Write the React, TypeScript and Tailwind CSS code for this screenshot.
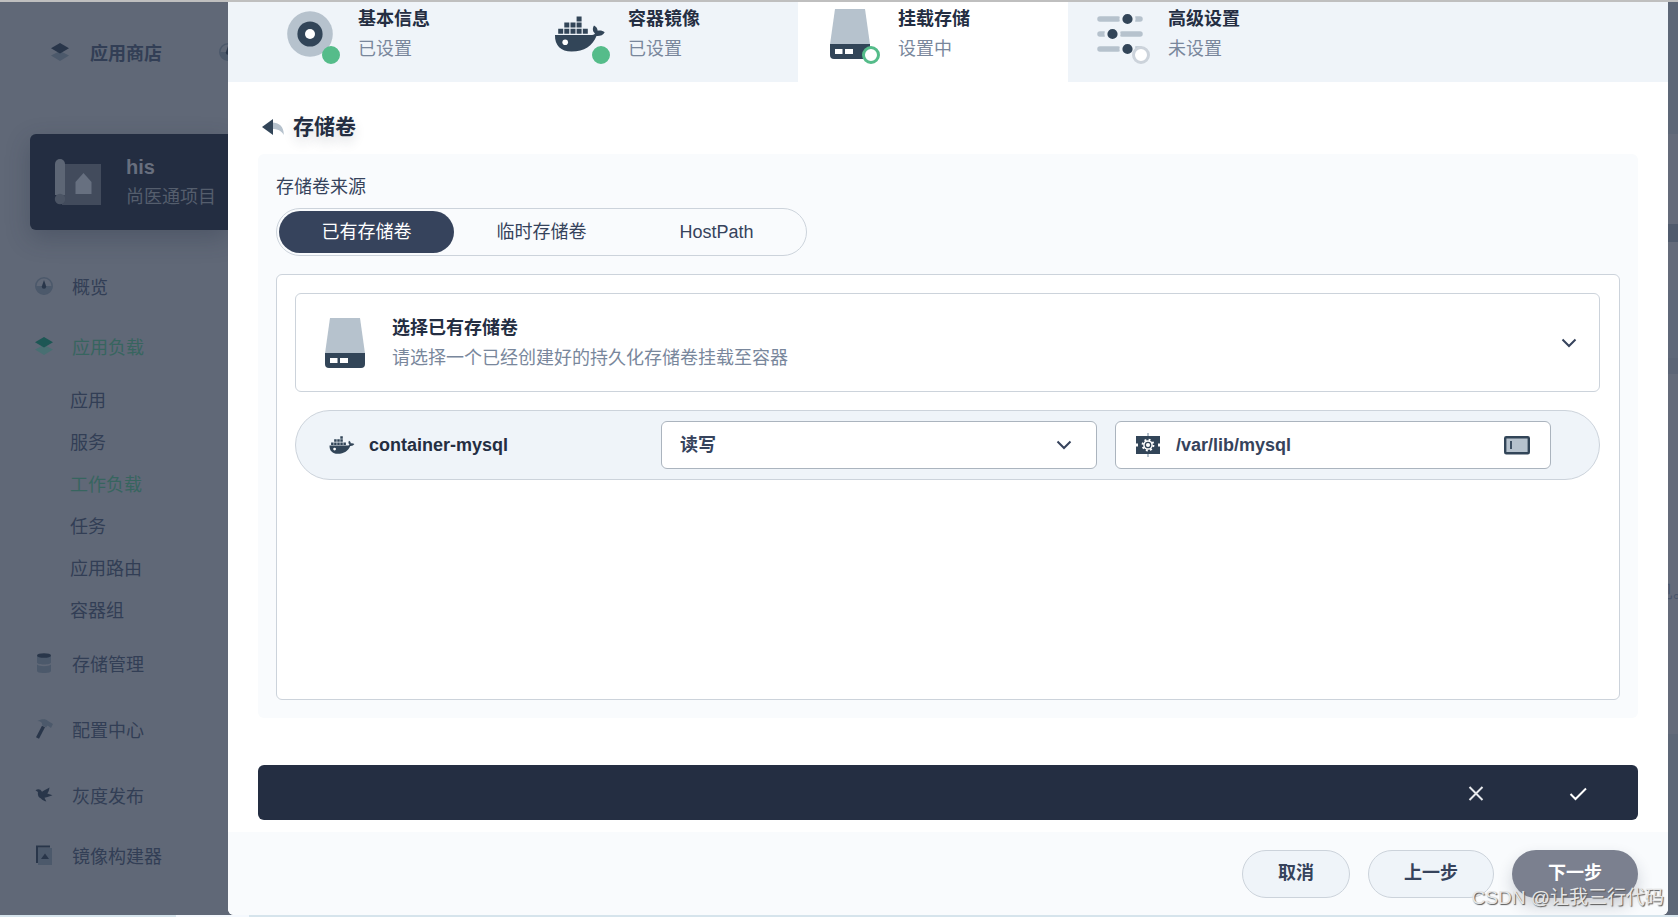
import { useState } from "react";
import type { ReactNode } from "react";

type Status = "done" | "active" | "todo";

const steps: { title: string; text: string; status: Status; icon: ReactNode }[] = [
  { title: "基本信息", text: "已设置", status: "done", icon: <DiscIcon /> },
  { title: "容器镜像", text: "已设置", status: "done", icon: <DockerIcon className="w-[60px] h-[60px]" /> },
  { title: "挂载存储", text: "设置中", status: "active", icon: <StorageIcon /> },
  { title: "高级设置", text: "未设置", status: "todo", icon: <SlidersIcon /> },
];

const workloads = ["应用", "服务", "工作负载", "任务", "应用路由", "容器组"];

const sources = ["已有存储卷", "临时存储卷", "HostPath"];

const dotStyle: Record<Status, string> = {
  done: "bg-[#55bc8a] border-[#55bc8a]",
  active: "bg-white border-[#55bc8a]",
  todo: "bg-white border-[#ccd3db]",
};

function DiscIcon() {
  return (
    <svg viewBox="0 0 60 60" className="w-[60px] h-[60px]">
      <circle cx="30" cy="30" r="22.8" fill="#b6c2cd" />
      <circle cx="30" cy="30" r="12.6" fill="#324558" />
      <circle cx="30" cy="30" r="5" fill="#fff" />
    </svg>
  );
}

function DockerIcon({ className }: { className: string }) {
  return (
    <svg viewBox="0 0 60 60" className={className}>
      <g fill="#324558">
        <path d="M26.6 12.4h5v5h-5zM14.3 18.6h5v5h-5zM20.5 18.6h5v5h-5zM26.6 18.6h5v5h-5zM8.2 24.8h5v5h-5zM14.3 24.8h5v5h-5zM20.5 24.8h5v5h-5zM26.6 24.8h5v5h-5zM32.8 24.8h5v5h-5z" />
        <path d="M5 31h37.2c1.3 0 2.4-.6 2.8-1.4-2.6-2.200-2.6-5.600-1-8 2.100 1 3.400 2.900 3.700 5.200 2.500-.5 5.200 0 7 1.400-1.600 2.900-4.700 4.100-8.200 3.800C42.500 41.700 34.500 47.600 21.500 47.600 11 47.600 4.600 41.500 5 31z" />
      </g>
      <circle cx="15.2" cy="38.2" r="2.8" fill="#fff" />
    </svg>
  );
}

function StorageIcon() {
  return (
    <svg viewBox="0 0 60 60" className="w-[60px] h-[60px]">
      <path d="M15 5h30l5 35.5H10z" fill="#b6c2cd" />
      <path d="M10 40h40v11a4 4 0 0 1-4 4H14a4 4 0 0 1-4-4z" fill="#324558" />
      <path d="M15 45h7.500v5H15zM25 45h8v5h-8z" fill="#fff" />
    </svg>
  );
}

function SlidersIcon() {
  return (
    <svg viewBox="0 0 60 60" className="w-[60px] h-[60px]">
      <path
        d="M10 15h18M46 15h4M10 30h4M32 30h18M10 45h18M46 45h4"
        stroke="#b6c2cd"
        strokeWidth="5.5"
        strokeLinecap="round"
      />
      <g fill="#324558" stroke="#eff4f9" strokeWidth="3">
        <circle cx="37.5" cy="15" r="6.6" />
        <circle cx="22.5" cy="30" r="6.6" />
        <circle cx="37.5" cy="45" r="6.6" />
      </g>
    </svg>
  );
}

function BackIcon() {
  return (
    <svg viewBox="0 0 24 24" className="w-6 h-6">
      <path d="M11 7.500c7 0 12 4 11.800 12.500C20.500 15.600 16.500 14 11 14z" fill="#b6c2cd" />
      <path d="M12 4v16L1 12z" fill="#324558" />
    </svg>
  );
}

function ChevronIcon() {
  return (
    <svg viewBox="0 0 24 24" className="w-6 h-6 shrink-0 pointer-events-none" fill="none" stroke="#36435c" strokeWidth="2">
      <path d="M5.500 8.500l6.500 6.500L18.500 8.500" />
    </svg>
  );
}

function GearIcon() {
  return (
    <svg viewBox="0 0 24 24" className="w-6 h-6 shrink-0">
      <path d="M12 0v24" stroke="#b6c2cd" strokeWidth="2" />
      <path d="M0 3h24v7.500h-2v3h2V21H0v-7.500h2v-3H0z" fill="#324558" />
      <circle cx="12" cy="12" r="5.4" fill="none" stroke="#fff" strokeWidth="2" strokeDasharray="1.9 2.340" />
      <circle cx="12" cy="12" r="4.8" fill="#fff" />
      <circle cx="12" cy="12" r="2.7" fill="none" stroke="#324558" strokeWidth="1.3" />
    </svg>
  );
}

function FieldIcon() {
  return (
    <svg viewBox="0 0 26 24" className="w-[26px] h-6 shrink-0">
      <rect x="1.2" y="4.2" width="23.6" height="16" rx="1" fill="#b6c2cd" stroke="#324558" strokeWidth="2.4" />
      <path d="M7 8v8" stroke="#324558" strokeWidth="1.8" />
    </svg>
  );
}

function LayersIcon({ active = false }: { active?: boolean }) {
  return (
    <svg viewBox="0 0 20 20" className="w-5 h-5">
      <path d="M10 9l9 4.500-9 5.500-9-5.500z" fill={active ? "#486f72" : "#4c596b"} />
      <path d="M10 1l9 5.200-9 5.300-9-5.300z" fill={active ? "#1d5755" : "#29364a"} />
    </svg>
  );
}

function GaugeIcon() {
  return (
    <svg viewBox="0 0 20 20" className="w-5 h-5">
      <circle cx="10" cy="10" r="8.2" fill="none" stroke="#4c596b" strokeWidth="1.5" />
      <path d="M1.500 10h17a8.500 8.500 0 0 1-17 0z" fill="#4c596b" />
      <path d="M10 4l2.200 6.500a2.200 2.200 0 1 1-4.400 0z" fill="#29364a" />
    </svg>
  );
}

function DatabaseIcon() {
  return (
    <svg viewBox="0 0 20 20" className="w-5 h-5">
      <path d="M3 3v6.500c0 2.600 14 2.600 14 0V3zM3 11.500v6.500c0 2.700 14 2.700 14 0v-6.500c-2 2.300-12 2.300-14 0z" fill="#4c596b" />
      <ellipse cx="10" cy="2.5" rx="7" ry="2.3" fill="#29364a" />
    </svg>
  );
}

function HammerIcon() {
  return (
    <svg viewBox="0 0 20 20" className="w-5 h-5">
      <path d="M9.500 7.500L3.500 19" stroke="#29364a" strokeWidth="3.4" />
      <path d="M3.500 2C8-.5 12 0 14 2l5 3-2 4-3.500-2.500-1.500 2L8 6c1-2-1-3.800-4.500-4z" fill="#4c596b" />
    </svg>
  );
}

function BirdIcon() {
  return (
    <svg viewBox="0 0 20 20" className="w-5 h-5">
      <path
        d="M1.500 5.200C4 3.700 6.500 4 8 6.800 10 5 12.500 4.500 15.500 2.500 15.200 5 14.500 7 13.300 8.600L18.500 10.300 13.500 12 10.500 12.700 12.300 16.500C10 15.800 8 14.800 7 13.500 4.500 12.500 3.500 10.500 3.900 7z"
        fill="#29364a"
      />
    </svg>
  );
}

function ImageBuilderIcon() {
  return (
    <svg viewBox="0 0 20 20" className="w-5 h-5">
      <path d="M4 3h14v17H4z" fill="#4c596b" />
      <path d="M3 18V1.500H16" fill="none" stroke="#29364a" strokeWidth="2" />
      <path d="M11 8.500l4 5.500H7z" fill="#29364a" />
    </svg>
  );
}

function ProjectIcon() {
  return (
    <svg viewBox="0 0 48 48" className="w-12 h-12">
      <path d="M11 6h36v41H8z" fill="#424b5c" />
      <path d="M1 6a5 5 0 0 1 10 0v31H1z" fill="#5d6675" />
      <circle cx="6" cy="41" r="5.2" fill="#4b5464" />
      <path d="M29.500 15l8 9v12h-16V24z" fill="#677080" />
    </svg>
  );
}

function NavItem({ icon, label, active = false }: { icon: ReactNode; label: string; active?: boolean }) {
  return (
    <a href="#" className={`flex items-center h-[60px] gap-[18px] ${active ? "text-[#37655f]" : "text-[#323e55]"}`}>
      <span className="-mt-1">{icon}</span>
      {label}
    </a>
  );
}

function Sidebar() {
  return (
    <aside className="w-[228px] shrink-0 overflow-hidden text-[#323e55]">
      <div className="flex items-center h-[104px] pl-[50px] whitespace-nowrap">
        <span className="-mt-1"><LayersIcon /></span>
        <a href="#" className="ml-5 font-bold">应用商店</a>
        <span className="ml-14 -mt-1"><GaugeIcon /></span>
      </div>
      <div className="flex items-center h-24 mt-7 ml-[30px] pl-6 gap-6 rounded-l-md bg-[#232d41] shadow-[0_8px_24px_rgba(35,45,65,0.3)] whitespace-nowrap text-[#686f7e]">
        <ProjectIcon />
        <div>
          <p className="text-[20px] leading-[30px] font-bold">his</p>
          <p className="leading-[30px] text-[#555e6d]">尚医通项目</p>
        </div>
      </div>
      <nav className="pl-[34px] pt-7">
        <NavItem icon={<GaugeIcon />} label="概览" />
        <NavItem icon={<LayersIcon active />} label="应用负载" active />
        <ul className="pl-9 pt-[2px]">
          {workloads.map((w) => (
            <li key={w}>
              <a href="#" className={`block leading-[42px] ${w === "工作负载" ? "text-[#37655f]" : ""}`}>{w}</a>
            </li>
          ))}
        </ul>
        <div className="flex flex-col gap-[6px] pt-[3px]">
          <NavItem icon={<DatabaseIcon />} label="存储管理" />
          <NavItem icon={<HammerIcon />} label="配置中心" />
          <NavItem icon={<BirdIcon />} label="灰度发布" />
        </div>
        <NavItem icon={<ImageBuilderIcon />} label="镜像构建器" />
      </nav>
    </aside>
  );
}

// sliver of the page that stays visible right of the dialog
function PageEdge() {
  return (
    <div className="flex flex-col w-[10px] shrink-0 overflow-hidden bg-[#5d6777]">
      <div className="h-[90px] mt-[132px] bg-[#646b7a]" />
      <div className="h-[18px] bg-[#505b6d]" />
      <div className="h-12 bg-[#646b7a]" />
      <div className="h-[68px] bg-[#5f6879]" />
      <div className="h-4 bg-[#5c6576]" />
      <div className="h-[360px] pt-[206px] bg-[#646b7a]">
        <p className="-ml-[13px] leading-6 whitespace-nowrap text-[#4a566c]">见。</p>
      </div>
    </div>
  );
}

export default function App() {
  const [source, setSource] = useState("已有存储卷");
  const [mode, setMode] = useState("rw");
  const [path, setPath] = useState("/var/lib/mysql");

  return (
    <div className="relative flex flex-col min-h-screen overflow-hidden bg-[#606877] border-t-2 border-[#bfbfbf] font-['Liberation_Sans','Noto_Sans_CJK_SC',sans-serif] text-[18px] text-[#36435c]">
      <div className="flex flex-1">
        <Sidebar />

        <main className="flex flex-col flex-1 min-w-0 bg-white rounded-b-md overflow-hidden">
          <header className="flex h-20 pl-[30px] bg-[#eff4f9]">
            {steps.map((s) => (
              <button
                key={s.title}
                className={`flex items-start w-[270px] pl-[22px] pt-[2px] gap-[18px] text-left ${s.status === "active" ? "bg-white" : ""}`}
              >
                <span className="relative h-[60px]">
                  {s.icon}
                  <span className={`absolute right-0 bottom-0 w-[18px] h-[18px] rounded-full border-3 ${dotStyle[s.status]}`} />
                </span>
                <span>
                  <span className="block leading-[30px] font-bold text-[#242e42]">{s.title}</span>
                  <span className="block leading-[30px] text-[#79879c]">{s.text}</span>
                </span>
              </button>
            ))}
          </header>

          <div className="flex flex-col flex-1 px-[30px] pb-3">
            <div className="flex items-center h-[72px] pt-[18px] gap-2">
              <button aria-label="返回" className="ml-[3px]"><BackIcon /></button>
              <h1 className="text-[21px] font-bold text-[#242e42] [text-shadow:0_6px_12px_rgba(36,46,66,0.15)]">存储卷</h1>
            </div>

            <section className="flex flex-col flex-1 p-[18px] rounded-md bg-[#f9fbfd]">
              <h2 className="leading-[30px]">存储卷来源</h2>
              <div className="flex self-start mt-[6px] p-[2px] rounded-full border border-[#ccd3db]">
                {sources.map((s) => (
                  <button
                    key={s}
                    onClick={() => setSource(s)}
                    className={`w-[175px] h-[42px] rounded-full ${source === s ? "bg-[#36435c] text-white" : ""}`}
                  >
                    {s}
                  </button>
                ))}
              </div>

              <div className="flex-1 mt-[18px] py-[18px] pl-[18px] pr-[19px] rounded-md border border-[#ccd3db] bg-white">
                <button className="flex items-center w-full h-[99px] pl-[19px] pr-[18px] rounded-md border border-[#ccd3db] text-left">
                  <StorageIcon />
                  <span className="flex-1 ml-[17px]">
                    <span className="block leading-[30px] font-bold text-[#242e42]">选择已有存储卷</span>
                    <span className="block leading-[30px] text-[#79879c]">请选择一个已经创建好的持久化存储卷挂载至容器</span>
                  </span>
                  <ChevronIcon />
                </button>

                <div className="flex items-center h-[70px] mt-[18px] pl-[31px] pr-12 gap-[18px] rounded-full border border-[#ccd3db] bg-[#eff4f9]">
                  <div className="flex items-center w-[316px] gap-3">
                    <DockerIcon className="w-[30px] h-[30px]" />
                    <span className="font-bold text-[#242e42]">container-mysql</span>
                  </div>
                  <div className="grid flex-1 grid-cols-2 gap-[18px]">
                    <div className="relative flex items-center h-12 rounded-md border border-[#abb4be] bg-white">
                      <select
                        aria-label="读写模式"
                        value={mode}
                        onChange={(e) => setMode(e.target.value)}
                        className="w-full h-full pl-[18px] appearance-none bg-transparent font-bold outline-none"
                      >
                        <option value="rw">读写</option>
                        <option value="ro">只读</option>
                      </select>
                      <span className="absolute right-5 pointer-events-none"><ChevronIcon /></span>
                    </div>
                    <div className="flex items-center h-12 px-5 gap-4 rounded-md border border-[#abb4be] bg-white">
                      <GearIcon />
                      <input
                        aria-label="挂载路径"
                        value={path}
                        onChange={(e) => setPath(e.target.value)}
                        className="flex-1 min-w-0 font-bold outline-none"
                      />
                      <FieldIcon />
                    </div>
                  </div>
                </div>
              </div>
            </section>

            <div className="flex items-center justify-end h-[55px] mt-[47px] pr-12 gap-[78px] rounded-md bg-[#242e42]">
              <button aria-label="放弃">
                <svg viewBox="0 0 24 24" className="w-6 h-6" fill="none" stroke="#e8eaed" strokeWidth="2">
                  <path d="M5.500 6l13 13M18.500 6l-13 13" />
                </svg>
              </button>
              <button aria-label="确认">
                <svg viewBox="0 0 24 24" className="w-6 h-6" fill="none" stroke="#fff" strokeWidth="2">
                  <path d="M4.500 13l5 5L20 7.500" />
                </svg>
              </button>
            </div>
          </div>

          <footer className="flex items-center justify-end h-[83px] px-[30px] gap-[18px] bg-[#f9fbfd] font-bold">
            <button className="w-[108px] h-12 rounded-full border border-[#ccd3db] bg-[#eff4f9]">取消</button>
            <button className="w-[126px] h-12 rounded-full border border-[#ccd3db] bg-[#eff4f9]">上一步</button>
            <button className="w-[126px] h-12 rounded-full bg-[#7b808f] text-white shadow-[0_8px_16px_rgba(36,46,66,0.2)]">下一步</button>
          </footer>
        </main>

        <PageEdge />
      </div>

      <div className="flex h-[2px] bg-[#d6e4ec]">
        <span className="w-[73px] ml-44 bg-[#f4f8fd]" />
      </div>

      <p className="absolute right-[14px] bottom-1 leading-[30px] text-[19px] text-[#e6e6e6] [text-shadow:1px_1px_1px_#555]">CSDN @让我三行代码</p>
    </div>
  );
}
